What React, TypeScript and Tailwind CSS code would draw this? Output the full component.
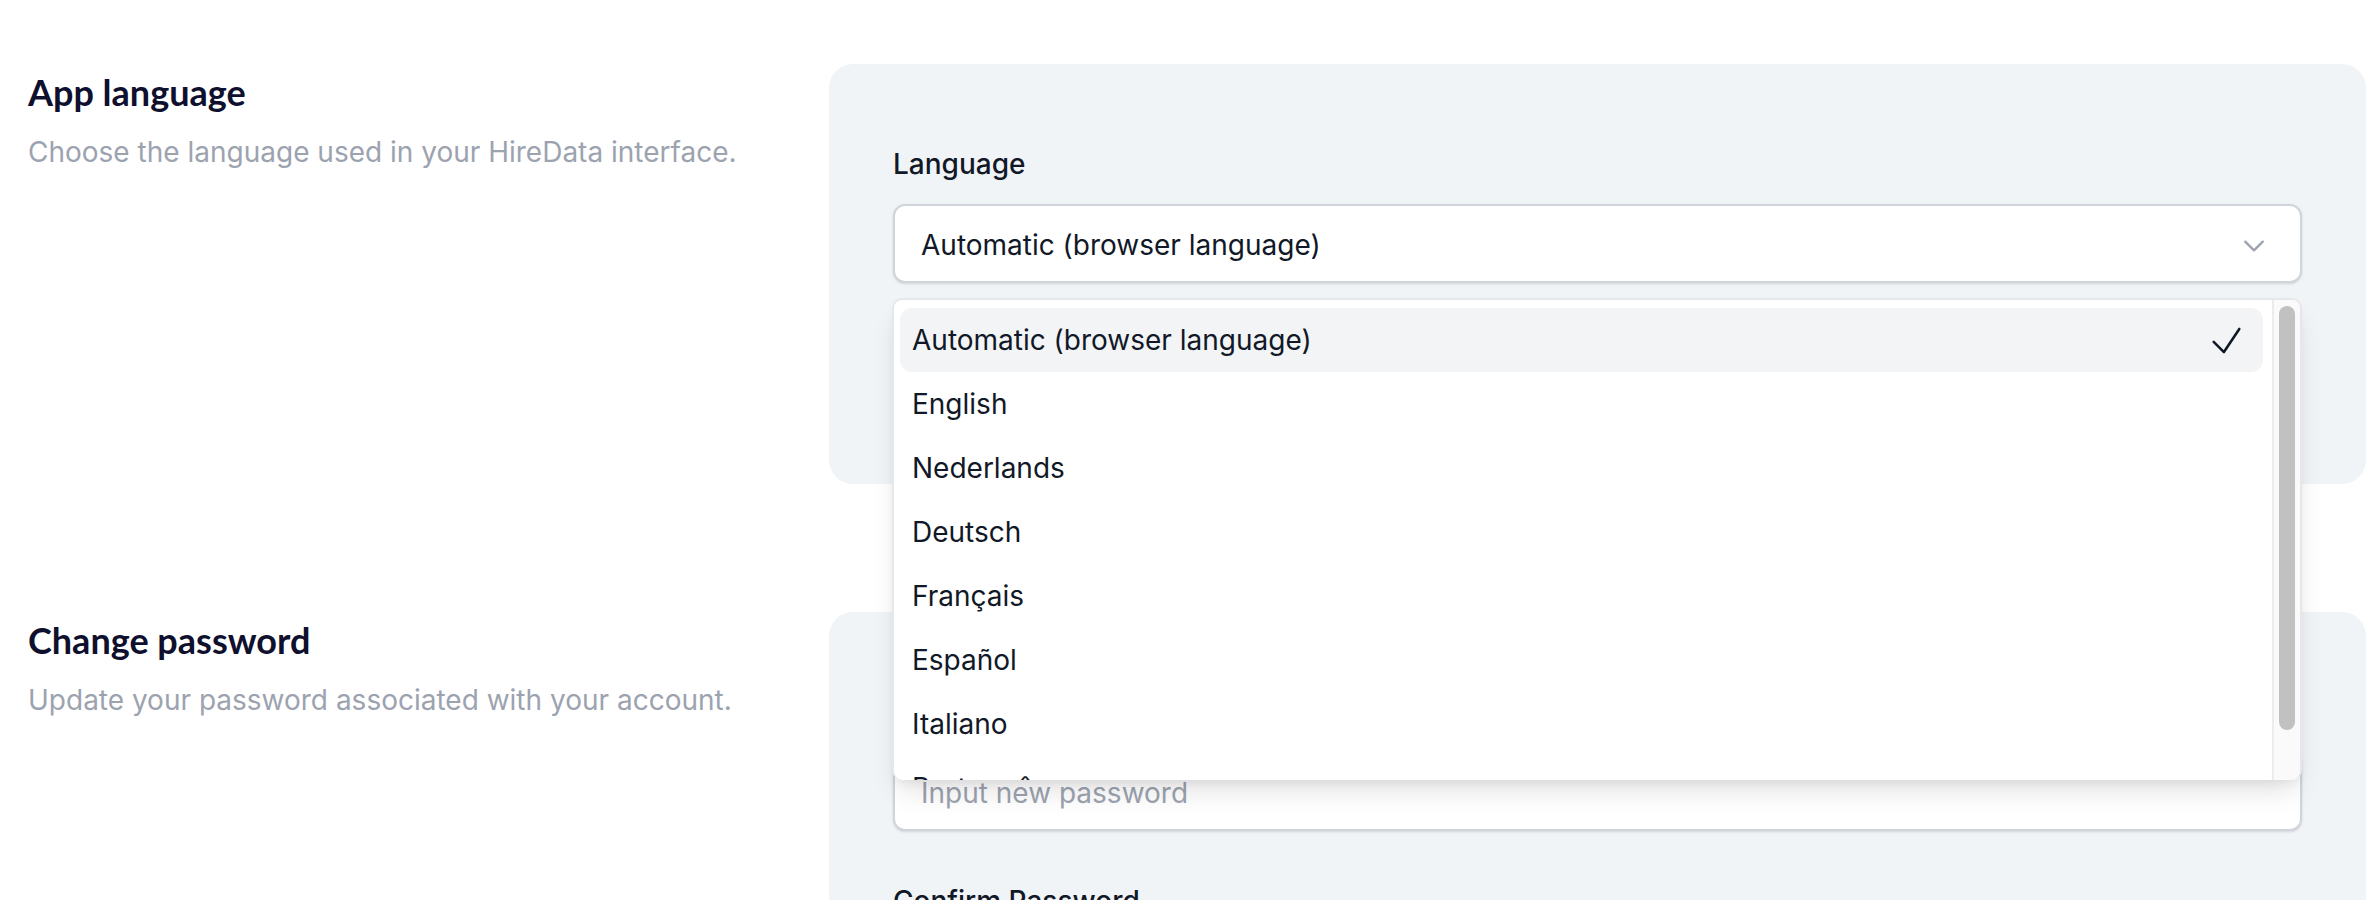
const languages = ["Automatic (browser language)", "English", "Nederlands", "Deutsch", "Français", "Español", "Italiano", "Português"];

const SectionIntro = ({ title, text }: { title: string; text: string }) => (
  <div className="w-[801px] shrink-0 pt-[10px]">
    <h2 className="font-['Lato',sans-serif] text-[36px] leading-[36px] font-bold text-[#0f0f2e]">{title}</h2>
    <p className="mt-[24px] text-[28px] leading-[36px] text-[#9ca3af]">{text}</p>
  </div>
);

export default function App() {
  return (
    <div className="h-[900px] overflow-hidden bg-white pt-[64px] pl-[28px] pr-[14px] font-['Inter',sans-serif]">
      {/* App language */}
      <section className="flex">
        <SectionIntro title="App language" text="Choose the language used in your HireData interface." />
        <div className="h-[420px] flex-1 rounded-[24px] bg-[#f1f4f7] pt-[80px] pl-[64px] pr-[64px]">
          <label className="block text-[28px] leading-[40px] font-medium text-[#111827]">Language</label>
          <div className="relative mt-[20px]">
            <div className="flex h-[79px] items-center justify-between rounded-[12px] border-2 border-[#d1d5db] bg-white pl-[26px] pr-[32px] shadow-sm">
              <span className="pt-[2px] text-[28px] text-[#111827]">Automatic (browser language)</span>
              <svg className="mt-[4px] h-[28px] w-[28px] text-[#9ca3af]" viewBox="0 0 24 24" fill="none" stroke="currentColor" strokeWidth={2}>
                <path strokeLinecap="round" strokeLinejoin="round" d="M19.5 8.25l-7.5 7.5-7.5-7.5" />
              </svg>
            </div>
            <div className="absolute top-[94px] left-[-1px] right-0 z-10 flex h-[482px] overflow-hidden rounded-[10px] border-2 border-b-0 border-[#e5e7eb] bg-white shadow-[0_16px_28px_-6px_rgba(0,0,0,0.12),0_6px_10px_-3px_rgba(0,0,0,0.06)]">
              <ul className="flex-1 pt-[8px] pl-[6px] pr-[9px]">
                {languages.map((lang, i) => (
                  <li
                    key={lang}
                    className={`flex h-[64px] items-center justify-between rounded-[12px] pl-[12px] pr-[16px] text-[28px] text-[#111827] ${i === 0 ? "bg-[#f3f4f6]" : ""}`}
                  >
                    {lang}
                    {i === 0 && (
                      <svg className="h-[41px] w-[41px]" viewBox="0 0 24 24" fill="none" stroke="currentColor" strokeWidth={1.5}>
                        <path strokeLinecap="round" strokeLinejoin="round" d="M4.5 12.75l6 6 9-13.5" />
                      </svg>
                    )}
                  </li>
                ))}
              </ul>
              <div className="w-[28px] shrink-0 border-l-2 border-[#ececec] bg-[#fafafa] pt-[6px] pl-[5px]">
                <div className="h-[424px] w-[16px] rounded-full bg-[#c1c1c1]" />
              </div>
            </div>
          </div>
        </div>
      </section>

      {/* Change password */}
      <section className="mt-[128px] flex">
        <SectionIntro title="Change password" text="Update your password associated with your account." />
        <div className="flex-1 rounded-[24px] bg-[#f1f4f7] pt-[80px] pl-[64px] pr-[64px]">
          <label className="block text-[28px] leading-[40px] font-medium text-[#111827]">New password</label>
          <div className="mt-[20px] flex h-[79px] items-center rounded-[12px] border-2 border-[#d1d5db] bg-white pt-[2px] pl-[26px] text-[28px] text-[#9ca3af] shadow-sm">
            Input new password
          </div>
          <label className="mt-[50px] block text-[28px] leading-[40px] font-medium text-[#111827]">Confirm Password</label>
        </div>
      </section>
    </div>
  );
}
